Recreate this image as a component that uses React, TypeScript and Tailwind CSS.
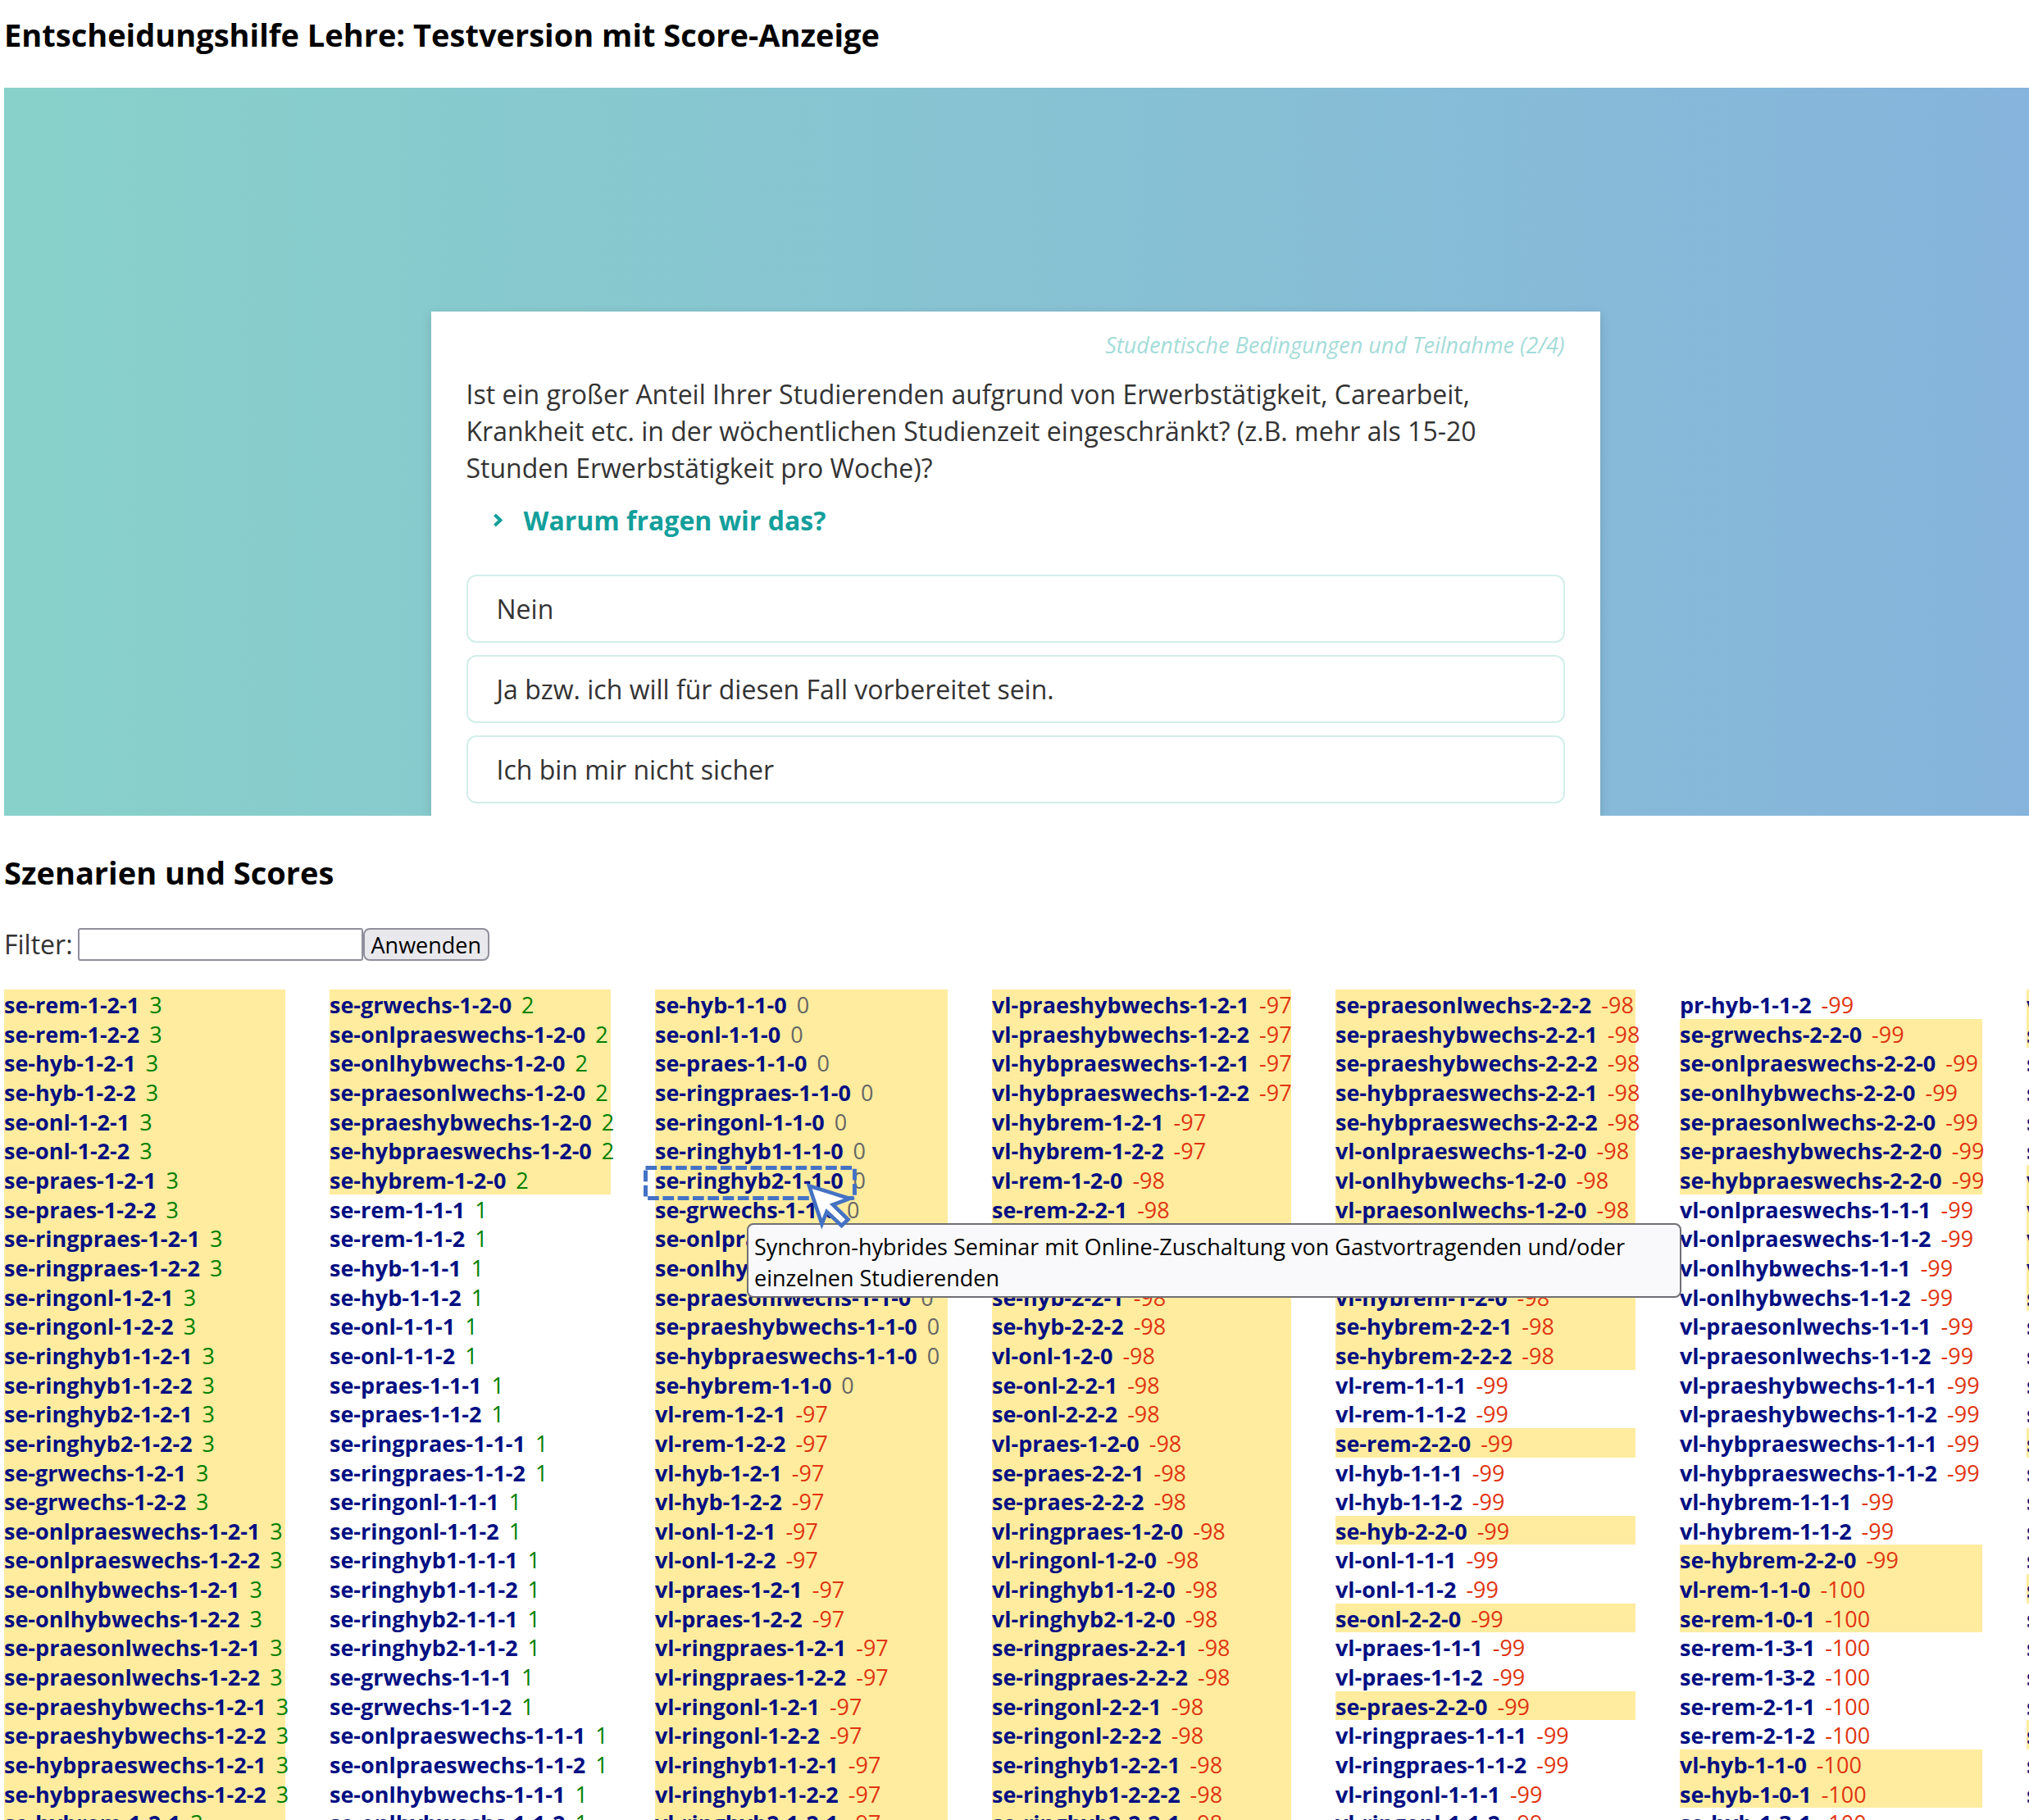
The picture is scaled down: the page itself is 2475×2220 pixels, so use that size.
import React from "react";

type Group = { score: number; names: string[] };
type Column = { groups: Group[]; marked: "all" | number[] };

const parse = (text: string) => text.trim().split(/\s+/);

const columns: Column[] = [
  {
    marked: "all",
    groups: [
      {
        score: 3,
        names: parse(`se-rem-1-2-1 se-rem-1-2-2 se-hyb-1-2-1 se-hyb-1-2-2 se-onl-1-2-1 se-onl-1-2-2
          se-praes-1-2-1 se-praes-1-2-2 se-ringpraes-1-2-1 se-ringpraes-1-2-2 se-ringonl-1-2-1
          se-ringonl-1-2-2 se-ringhyb1-1-2-1 se-ringhyb1-1-2-2 se-ringhyb2-1-2-1 se-ringhyb2-1-2-2
          se-grwechs-1-2-1 se-grwechs-1-2-2 se-onlpraeswechs-1-2-1 se-onlpraeswechs-1-2-2
          se-onlhybwechs-1-2-1 se-onlhybwechs-1-2-2 se-praesonlwechs-1-2-1 se-praesonlwechs-1-2-2
          se-praeshybwechs-1-2-1 se-praeshybwechs-1-2-2 se-hybpraeswechs-1-2-1
          se-hybpraeswechs-1-2-2 se-hybrem-1-2-1`),
      },
    ],
  },
  {
    marked: [1, 2, 3, 4, 5, 6, 7],
    groups: [
      {
        score: 2,
        names: parse(`se-grwechs-1-2-0 se-onlpraeswechs-1-2-0 se-onlhybwechs-1-2-0
          se-praesonlwechs-1-2-0 se-praeshybwechs-1-2-0 se-hybpraeswechs-1-2-0 se-hybrem-1-2-0`),
      },
      {
        score: 1,
        names: parse(`se-rem-1-1-1 se-rem-1-1-2 se-hyb-1-1-1 se-hyb-1-1-2 se-onl-1-1-1 se-onl-1-1-2
          se-praes-1-1-1 se-praes-1-1-2 se-ringpraes-1-1-1 se-ringpraes-1-1-2 se-ringonl-1-1-1
          se-ringonl-1-1-2 se-ringhyb1-1-1-1 se-ringhyb1-1-1-2 se-ringhyb2-1-1-1 se-ringhyb2-1-1-2
          se-grwechs-1-1-1 se-grwechs-1-1-2 se-onlpraeswechs-1-1-1 se-onlpraeswechs-1-1-2
          se-onlhybwechs-1-1-1 se-onlhybwechs-1-1-2`),
      },
    ],
  },
  {
    marked: "all",
    groups: [
      {
        score: 0,
        names: parse(`se-hyb-1-1-0 se-onl-1-1-0 se-praes-1-1-0 se-ringpraes-1-1-0 se-ringonl-1-1-0
          se-ringhyb1-1-1-0 se-ringhyb2-1-1-0 se-grwechs-1-1-0 se-onlpraeswechs-1-1-0
          se-onlhybwechs-1-1-0 se-praesonlwechs-1-1-0 se-praeshybwechs-1-1-0
          se-hybpraeswechs-1-1-0 se-hybrem-1-1-0`),
      },
      {
        score: -97,
        names: parse(`vl-rem-1-2-1 vl-rem-1-2-2 vl-hyb-1-2-1 vl-hyb-1-2-2 vl-onl-1-2-1 vl-onl-1-2-2
          vl-praes-1-2-1 vl-praes-1-2-2 vl-ringpraes-1-2-1 vl-ringpraes-1-2-2 vl-ringonl-1-2-1
          vl-ringonl-1-2-2 vl-ringhyb1-1-2-1 vl-ringhyb1-1-2-2 vl-ringhyb2-1-2-1`),
      },
    ],
  },
  {
    marked: "all",
    groups: [
      {
        score: -97,
        names: parse(`vl-praeshybwechs-1-2-1 vl-praeshybwechs-1-2-2 vl-hybpraeswechs-1-2-1
          vl-hybpraeswechs-1-2-2 vl-hybrem-1-2-1 vl-hybrem-1-2-2`),
      },
      {
        score: -98,
        names: parse(`vl-rem-1-2-0 se-rem-2-2-1 se-rem-2-2-2 vl-hyb-1-2-0 se-hyb-2-2-1 se-hyb-2-2-2
          vl-onl-1-2-0 se-onl-2-2-1 se-onl-2-2-2 vl-praes-1-2-0 se-praes-2-2-1 se-praes-2-2-2
          vl-ringpraes-1-2-0 vl-ringonl-1-2-0 vl-ringhyb1-1-2-0 vl-ringhyb2-1-2-0
          se-ringpraes-2-2-1 se-ringpraes-2-2-2 se-ringonl-2-2-1 se-ringonl-2-2-2
          se-ringhyb1-2-2-1 se-ringhyb1-2-2-2 se-ringhyb2-2-2-1`),
      },
    ],
  },
  {
    marked: [1, 2, 3, 4, 5, 6, 7, 8, 9, 10, 11, 12, 13, 16, 19, 22, 25],
    groups: [
      {
        score: -98,
        names: parse(`se-praesonlwechs-2-2-2 se-praeshybwechs-2-2-1 se-praeshybwechs-2-2-2
          se-hybpraeswechs-2-2-1 se-hybpraeswechs-2-2-2 vl-onlpraeswechs-1-2-0
          vl-onlhybwechs-1-2-0 vl-praesonlwechs-1-2-0 vl-praeshybwechs-1-2-0
          vl-hybpraeswechs-1-2-0 vl-hybrem-1-2-0 se-hybrem-2-2-1 se-hybrem-2-2-2`),
      },
      {
        score: -99,
        names: parse(`vl-rem-1-1-1 vl-rem-1-1-2 se-rem-2-2-0 vl-hyb-1-1-1 vl-hyb-1-1-2 se-hyb-2-2-0
          vl-onl-1-1-1 vl-onl-1-1-2 se-onl-2-2-0 vl-praes-1-1-1 vl-praes-1-1-2 se-praes-2-2-0
          vl-ringpraes-1-1-1 vl-ringpraes-1-1-2 vl-ringonl-1-1-1 vl-ringonl-1-1-2`),
      },
    ],
  },
  {
    marked: [2, 3, 4, 5, 6, 7, 20, 21, 22, 27, 28],
    groups: [
      {
        score: -99,
        names: parse(`pr-hyb-1-1-2 se-grwechs-2-2-0 se-onlpraeswechs-2-2-0 se-onlhybwechs-2-2-0
          se-praesonlwechs-2-2-0 se-praeshybwechs-2-2-0 se-hybpraeswechs-2-2-0
          vl-onlpraeswechs-1-1-1 vl-onlpraeswechs-1-1-2 vl-onlhybwechs-1-1-1
          vl-onlhybwechs-1-1-2 vl-praesonlwechs-1-1-1 vl-praesonlwechs-1-1-2
          vl-praeshybwechs-1-1-1 vl-praeshybwechs-1-1-2 vl-hybpraeswechs-1-1-1
          vl-hybpraeswechs-1-1-2 vl-hybrem-1-1-1 vl-hybrem-1-1-2 se-hybrem-2-2-0`),
      },
      {
        score: -100,
        names: parse(`vl-rem-1-1-0 se-rem-1-0-1 se-rem-1-3-1 se-rem-1-3-2 se-rem-2-1-1 se-rem-2-1-2
          vl-hyb-1-1-0 se-hyb-1-0-1 se-hyb-1-3-1`),
      },
    ],
  },
  {
    marked: [1, 2, 7, 8, 9, 10, 11, 16, 21, 26],
    groups: [
      {
        score: -100,
        names: parse(`vl-onl-1-1-0 se-onl-1-0-1 se-onl-1-3-1 se-onl-1-3-2 se-onl-2-1-1 se-onl-2-1-2
          vl-praes-1-1-0 vl-ringpraes-1-1-0 vl-ringonl-1-1-0 vl-ringhyb1-1-1-0 se-praes-1-0-1
          se-praes-1-3-1 se-praes-1-3-2 se-praes-2-1-1 se-praes-2-1-2 se-ringpraes-1-0-1
          se-ringpraes-1-3-1 se-ringpraes-1-3-2 se-ringpraes-2-1-1 se-ringpraes-2-1-2
          se-ringonl-1-0-1 se-ringonl-1-3-1 se-ringonl-1-3-2 se-ringonl-2-1-1 se-ringonl-2-1-2
          se-ringhyb1-1-0-1 se-ringhyb1-1-3-1 se-ringhyb1-1-3-2 se-ringhyb1-2-1-1`),
      },
    ],
  },
];

const HOVERED = "se-ringhyb2-1-1-0";

const answers = ["Nein", "Ja bzw. ich will für diesen Fall vorbereitet sein.", "Ich bin mir nicht sicher"];

function scoreColor(score: number) {
  if (score > 0) return "text-[#008000]";
  if (score === 0) return "text-[#666666]";
  return "text-[#e03410]";
}

function HoverHint() {
  return (
    <>
      <div
        role="tooltip"
        className="absolute left-[112px] top-[71px] z-10 w-[1140px] whitespace-normal rounded-lg border-2 border-[#6f6f76] bg-[#f9f9fb] px-[7px] pb-[3px] pt-2 text-[27px] leading-[38px] text-black"
      >
        Synchron-hybrides Seminar mit Online-Zuschaltung von Gastvortragenden und/oder einzelnen
        Studierenden
      </div>
      <svg
        className="pointer-events-none absolute -left-5 -top-1 z-20"
        width="300"
        height="84"
        viewBox="779 1417 300 84"
        fill="none"
        aria-hidden="true"
      >
        <rect x="787.5" y="1424.5" width="255" height="37" stroke="#4472c4" strokeWidth="5" strokeDasharray="13.7 4.6" />
        <path
          d="M987 1446.5 L1036.500 1462 L1016 1469.500 L1034.500 1487.500 L1026.500 1495 L1008.500 1478 L1002.500 1493 Z"
          fill="#ffffff"
          stroke="#4472c4"
          strokeWidth="4.6"
        />
      </svg>
    </>
  );
}

function ScenarioColumn({ column }: { column: Column }) {
  const rows = column.groups.flatMap((g) => g.names.map((name) => ({ name, score: g.score })));
  return (
    <ul>
      {rows.map(({ name, score }, i) => {
        const marked = column.marked === "all" || column.marked.includes(i + 1);
        return (
          <li key={name} className={`relative whitespace-nowrap pt-[3px] ${marked ? "bg-[#ffec9e]" : ""}`}>
            <a href={`#${name}`} className="mr-3 font-bold text-[#000f82]">
              {name}
            </a>
            <span className={scoreColor(score)}>{score}</span>
            {name === HOVERED && <HoverHint />}
          </li>
        );
      })}
    </ul>
  );
}

export default function App() {
  return (
    <main className="h-screen overflow-hidden bg-white pl-[5px] pt-[17px] font-['Open_Sans','Noto_Sans',sans-serif] text-[#333333]">
      <h1 className="text-[38px] font-bold leading-[50px] text-black">
        Entscheidungshilfe Lehre: Testversion mit Score-Anzeige
      </h1>

      <section className="mt-10 h-[888px] overflow-hidden bg-linear-to-r/srgb from-[#88d1ca] to-[#86b4dc] pr-[3px] pt-[273px]">
        <div className="mx-auto min-h-full max-w-[1426px] bg-white px-[43px] pt-[23px] shadow-[0_4px_12px_rgba(0,0,0,0.15)]">
          <p className="text-right text-[27px] italic leading-9 text-[#a3dcd9]">
            Studentische Bedingungen und Teilnahme (2/4)
          </p>
          <p className="mt-[19px] max-w-[1260px] text-[32px] leading-[45px]">
            Ist ein großer Anteil Ihrer Studierenden aufgrund von Erwerbstätigkeit, Carearbeit,
            Krankheit etc. in der wöchentlichen Studienzeit eingeschränkt? (z.B. mehr als 15-20
            Stunden Erwerbstätigkeit pro Woche)?
          </p>
          <button
            type="button"
            aria-expanded="false"
            className="ml-8 mt-[19px] flex items-center gap-6 text-[32px] font-bold leading-[45px] text-[#139f9b]"
          >
            <svg width="14" height="18" viewBox="0 0 14 18" fill="none" aria-hidden="true">
              <path d="M2.500 2 L9.500 8.500 L2.500 15" stroke="currentColor" strokeWidth="4" />
            </svg>
            Warum fragen wir das?
          </button>
          <div className="mt-11 flex flex-col gap-[15px]">
            {answers.map((answer) => (
              <button
                key={answer}
                type="button"
                className="rounded-xl border-2 border-[#d3eeea] bg-white px-[35px] py-[17px] text-left text-[32px] leading-[45px]"
              >
                {answer}
              </button>
            ))}
          </div>
        </div>
      </section>

      <h2 className="mt-11 text-[38px] font-bold leading-[50px] text-black">Szenarien und Scores</h2>

      <form className="mt-[43px] flex h-10 items-center" onSubmit={(e) => e.preventDefault()}>
        <label htmlFor="filter" className="mr-[6px] text-[32px] leading-10">
          Filter:
        </label>
        <input
          id="filter"
          type="text"
          className="h-10 w-[348px] rounded-[3px] border-2 border-[#8f8f9d] bg-white px-1 text-[27px]"
        />
        <button
          type="submit"
          className="h-10 rounded-lg border-2 border-[#8f8f9d] bg-[#e9e9ed] px-2 pt-[2px] text-[27px] leading-[34px] text-black"
        >
          Anwenden
        </button>
      </form>

      <div className="mt-[35px] grid grid-cols-[343px_343px_357px_365px_366px_369px_369px] gap-x-[54px] text-[27px] leading-[1.21]">
        {columns.map((column, i) => (
          <ScenarioColumn key={i} column={column} />
        ))}
      </div>
    </main>
  );
}
